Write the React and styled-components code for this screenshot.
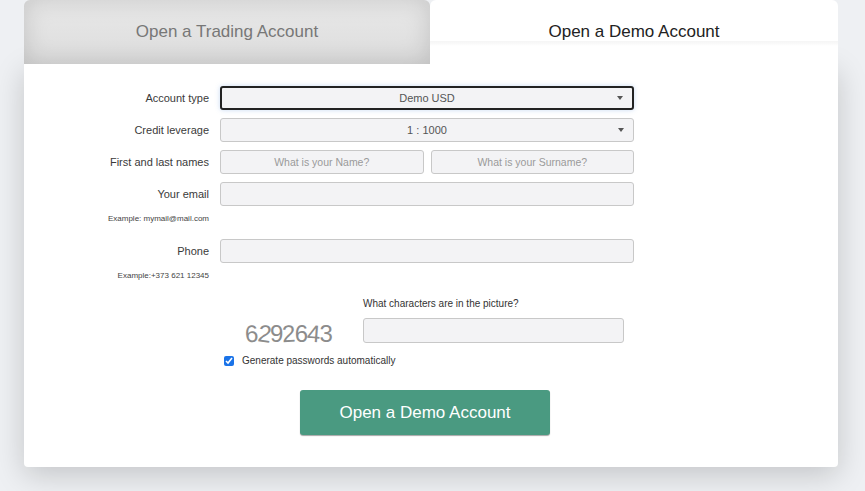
import React from 'react'
import styled, { createGlobalStyle } from 'styled-components'

const GlobalStyle = createGlobalStyle`
  html, body {
    margin: 0;
    background: #eef0f3;
    font-family: "Liberation Sans", Arial, sans-serif;
  }
  * {
    box-sizing: border-box;
  }
`

const Page = styled.div`
  width: 865px;
  padding: 0 27px 24px 24px;
`

const Tabs = styled.div`
  display: flex;
  height: 64px;
`

const Tab = styled.div`
  flex: ${p => (p.$active ? '0 0 408px' : '0 0 406px')};
  display: flex;
  align-items: center;
  justify-content: center;
  padding-bottom: 1px;
  font-size: 17px;
  border-radius: 6px 6px 0 0;
  color: ${p => (p.$active ? '#222' : '#777')};
  background: ${p =>
    p.$active
      ? 'linear-gradient(#fff 0, #fff 41px, #f5f5f5 41px, #fafafa 44px, #fff 46px)'
      : 'linear-gradient(#e9e9e9, #dcdcdc)'};
  box-shadow: ${p =>
    p.$active ? 'none' : 'inset 0 0 24px rgba(0,0,0,0.15)'};
`

const Card = styled.div`
  background: #fff;
  border-radius: 0 0 4px 4px;
  box-shadow: 0 8px 30px rgba(0, 0, 0, 0.18);
  padding: 22px 0 32px;
`

const Row = styled.div`
  display: flex;
  align-items: center;
  margin-bottom: 8px;
`

const Label = styled.div`
  width: 185px;
  margin-right: 11px;
  text-align: right;
  font-size: 11px;
  color: #3a3a3a;
`

const Field = styled.div`
  width: 414px;
  display: flex;
  gap: 7px;
`

const Box = styled.div`
  position: relative;
  flex: 1;
  height: 24px;
  display: flex;
  align-items: center;
  justify-content: center;
  font-size: ${p => (p.$hint ? '10.5px' : '11px')};
  color: ${p => (p.$hint ? '#9a9a9a' : '#555')};
  background: #f3f3f5;
  border: ${p => (p.$focus ? '2px solid #222' : '1px solid #c8c8c8')};
  border-radius: 3px;
  box-shadow: ${p => (p.$focus ? '0 0 5px rgba(100,150,220,0.35)' : 'none')};
`

const Caret = styled.span`
  position: absolute;
  right: 9px;
  top: 50%;
  margin-top: -2px;
  border-left: 3px solid transparent;
  border-right: 3px solid transparent;
  border-top: 4px solid #555;
`

const Hint = styled.div`
  width: 185px;
  text-align: right;
  font-size: 8px;
  line-height: 10px;
  color: #444;
  margin-top: -8px;
  padding: 8px 0 15px;
`

const Captcha = styled.div`
  display: flex;
  padding-left: 196px;
  margin-top: 2px;
`

const CaptchaPic = styled.div`
  width: 143px;
  display: flex;
  align-items: flex-end;
  justify-content: center;
  padding-right: 6px;
  margin-bottom: -5px;
  font-size: 24px;
  color: #8c8c8c;
  letter-spacing: -1px;
  span {
    display: inline-block;
  }
`

const CaptchaSide = styled.div`
  display: flex;
  flex-direction: column;
  width: 261px;
`

const CaptchaLabel = styled.div`
  font-size: 10px;
  line-height: 12px;
  color: #333;
  margin-bottom: 8px;
`

const CaptchaInput = styled.div`
  height: 25px;
  background: #f3f3f5;
  border: 1px solid #c8c8c8;
  border-radius: 3px;
`

const Check = styled.label`
  display: flex;
  align-items: center;
  margin: 12px 0 0 200px;
  font-size: 10px;
  line-height: 12px;
  color: #333;
  input {
    margin: 0 8px 0 0;
    width: 10px;
    height: 10px;
    accent-color: #1a73e8;
  }
`

const Submit = styled.button`
  display: block;
  width: 250px;
  height: 45px;
  margin: 23px 0 0 276px;
  border: none;
  border-radius: 3px;
  background: #4a9a81;
  box-shadow: 0 1px 1px rgba(0, 0, 0, 0.35);
  color: #fff;
  font-family: inherit;
  font-size: 17px;
`

const digits = [
  ['6', -4],
  ['2', 8],
  ['9', 0],
  ['2', -3],
  ['6', 0],
  ['4', 4],
  ['3', 0],
]

export default function App() {
  return (
    <>
      <GlobalStyle />
      <Page>
        <Tabs>
          <Tab>Open a Trading Account</Tab>
          <Tab $active>Open a Demo Account</Tab>
        </Tabs>
        <Card>
          <Row>
            <Label>Account type</Label>
            <Field>
              <Box $focus>Demo USD<Caret /></Box>
            </Field>
          </Row>
          <Row>
            <Label>Credit leverage</Label>
            <Field>
              <Box>1 : 1000<Caret /></Box>
            </Field>
          </Row>
          <Row>
            <Label>First and last names</Label>
            <Field>
              <Box $hint>What is your Name?</Box>
              <Box $hint>What is your Surname?</Box>
            </Field>
          </Row>
          <Row>
            <Label>Your email</Label>
            <Field>
              <Box />
            </Field>
          </Row>
          <Hint>Example: mymail@mail.com</Hint>
          <Row>
            <Label>Phone</Label>
            <Field>
              <Box />
            </Field>
          </Row>
          <Hint>Example:+373 621 12345</Hint>
          <Captcha>
            <CaptchaPic>
              {digits.map(([d, r], i) => (
                <span key={i} style={{ transform: `rotate(${r}deg)` }}>{d}</span>
              ))}
            </CaptchaPic>
            <CaptchaSide>
              <CaptchaLabel>What characters are in the picture?</CaptchaLabel>
              <CaptchaInput />
            </CaptchaSide>
          </Captcha>
          <Check>
            <input type="checkbox" defaultChecked />
            Generate passwords automatically
          </Check>
          <Submit>Open a Demo Account</Submit>
        </Card>
      </Page>
    </>
  )
}
